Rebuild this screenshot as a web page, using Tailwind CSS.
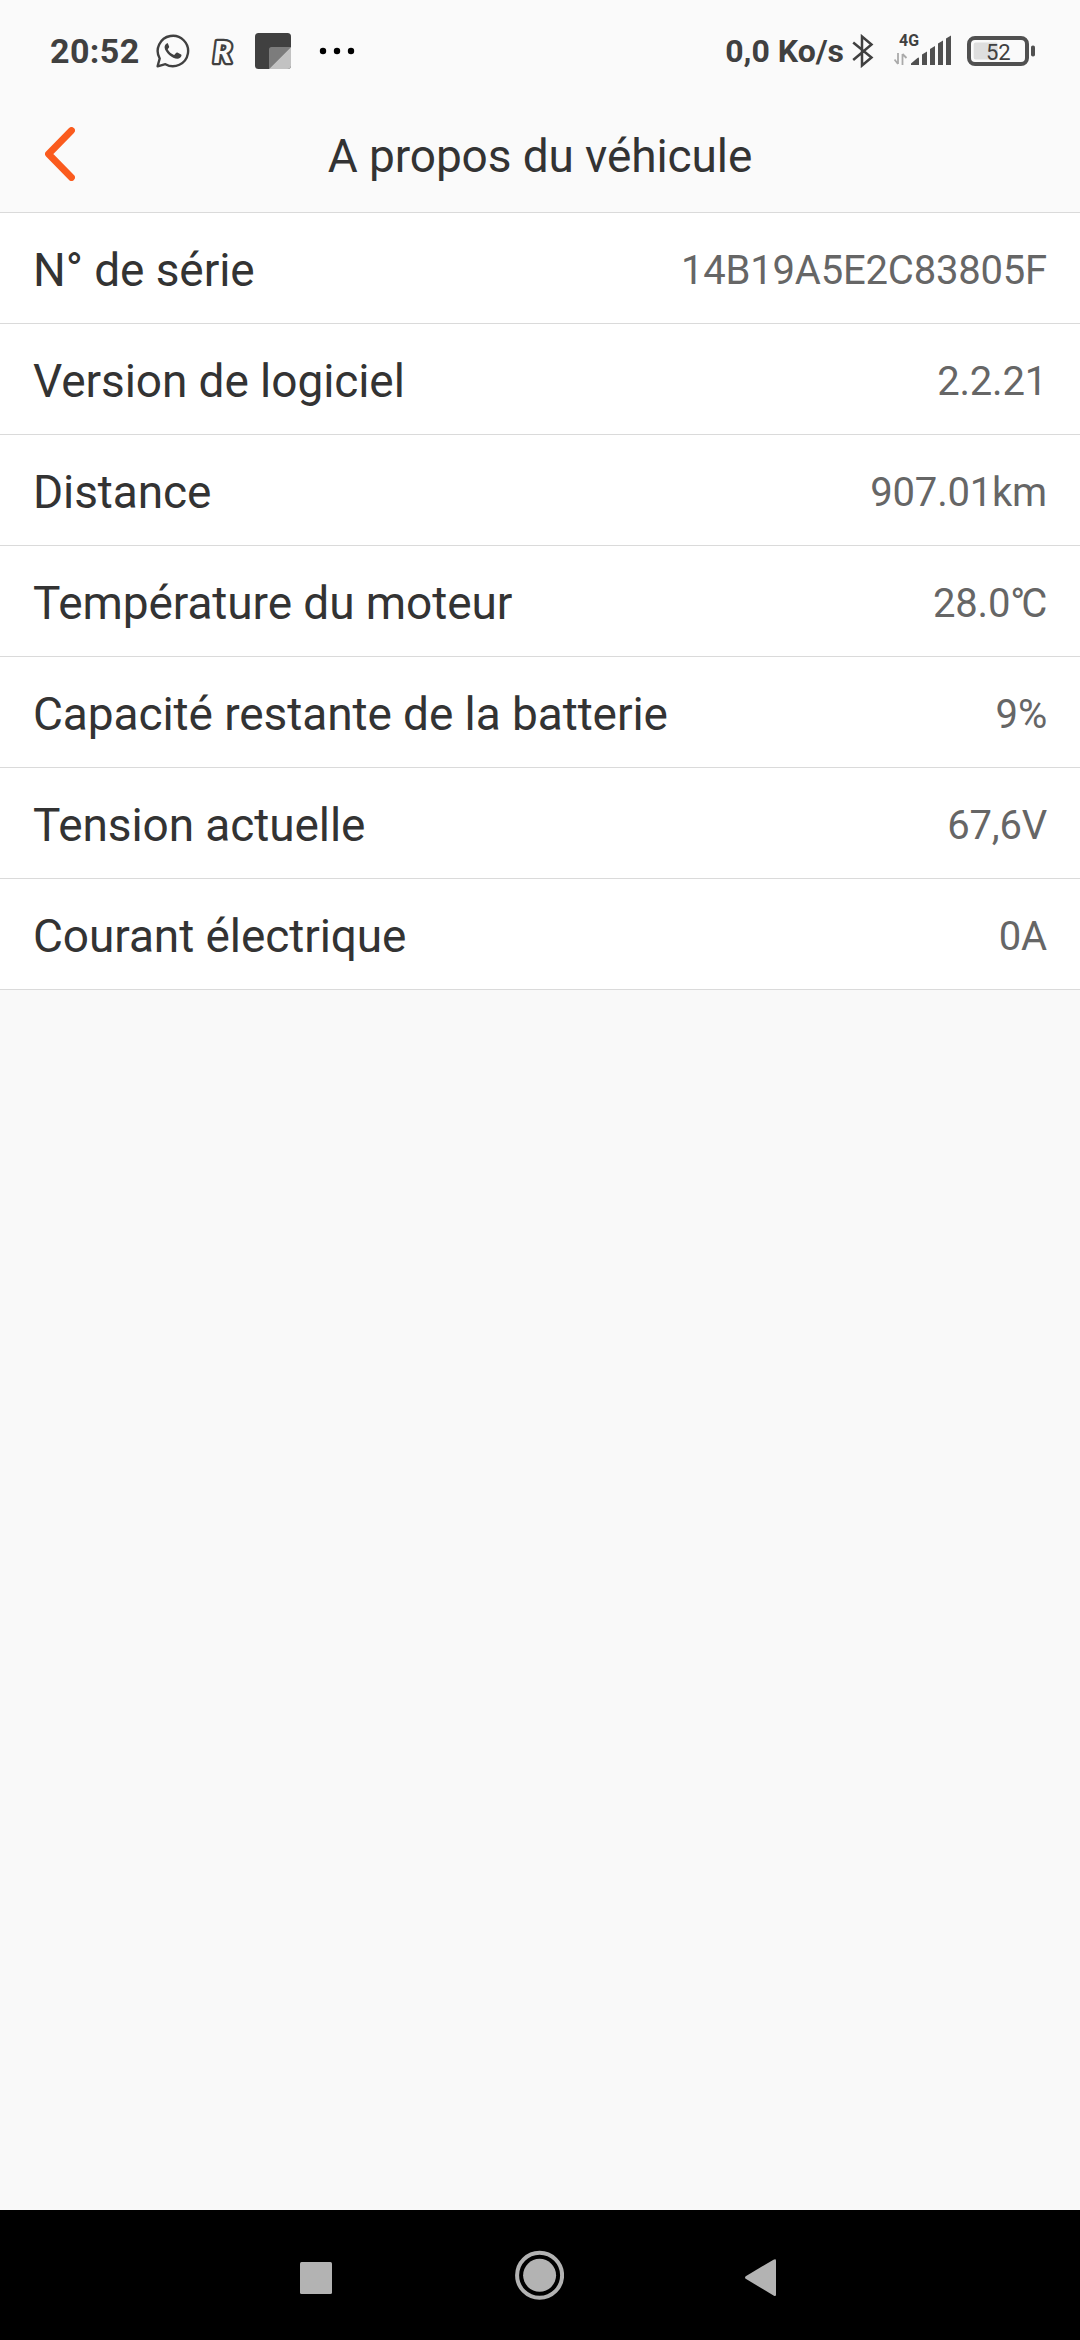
<!DOCTYPE html>
<html lang="fr">
<head>
    <meta charset="UTF-8">
    <meta name="viewport" content="width=device-width, initial-scale=1.0">
    <title>A propos du véhicule</title>
    <script src="https://cdn.jsdelivr.net/npm/@tailwindcss/browser@4"></script>
</head>
<body class="flex flex-col w-[1080px] h-[2340px] overflow-hidden bg-[#f9f9f9] font-[Roboto,sans-serif] text-[#333333]">

    <!-- Status bar -->
    <div class="flex items-center justify-between h-[102px] shrink-0 pl-[50px] pr-[45px] bg-[#fafafa] text-[#404040]">
        <div class="flex items-center">
            <span class="w-[106px] text-[34px] leading-none font-bold tracking-[0.4px]">20:52</span>
            <!-- WhatsApp -->
            <svg class="w-[34px] h-[34px]" viewBox="0 0 34 34" fill="none">
                <path d="M1.6 32.3 L3.7 24.5 A15.2 15.2 0 1 1 9.4 30.2 Z" stroke="currentColor" stroke-width="2.4" stroke-linejoin="round"/>
                <path d="M11.4 9.2c-1.6.5-2.9 2.2-2.8 4.2.2 2.5 2.2 5.3 4.6 7.5 2.700 2.400 5.800 4 8.300 3.900 2-.1 3.700-1.300 4-3.200.1-.7 0-1-.4-1.200l-3.700-1.800c-.6-.3-1-.1-1.400.4l-1.300 1.600c-.3.400-.7.400-1.200.200-2.400-1-4.300-2.800-5.600-5-.2-.4-.2-.7.100-1.100l1-1.300c.2-.4.200-.7.100-1l-1.400-3.300c-.1-.2-.2-.1-.3.100z" fill="currentColor"/>
            </svg>
            <!-- R logo -->
            <svg class="w-[26px] h-[34px] ml-5 overflow-visible" viewBox="0 0 26 34">
                <text x="3" y="28.5" textLength="19" lengthAdjust="spacingAndGlyphs" font-family="Lato" font-weight="900" font-style="italic" font-size="31" fill="#fafafa" stroke="currentColor" stroke-width="4.6" stroke-linejoin="round" paint-order="stroke">R</text>
            </svg>
            <!-- Note square -->
            <svg class="w-9 h-9 ml-[19px]" viewBox="0 0 36 36">
                <rect width="36" height="36" rx="3.5" fill="#404040"/>
                <path d="M14 36V16.5Q14 14 16.5 14H36Z" fill="#7c7c7c"/>
                <path d="M14 36L36 14V32.5Q36 36 32.5 36Z" fill="#c2c2c2"/>
            </svg>
            <svg class="w-9 h-2 ml-[28px]" viewBox="0 0 36 8">
                <circle cx="4" cy="4" r="3.2"/>
                <circle cx="18" cy="4" r="3.2"/>
                <circle cx="32" cy="4" r="3.2"/>
            </svg>
        </div>

        <div class="flex items-center">
            <span class="text-[32px] leading-none font-bold">0,0 Ko/s</span>
            <!-- Bluetooth -->
            <svg class="w-[22px] h-[34px] ml-2" viewBox="0 0 22 34" fill="none" stroke="currentColor" stroke-width="2.5">
                <path d="M1.2 8.500L19.500 23.500L10 31.500V2.500L19.500 10.500L1.200 26"/>
            </svg>
            <!-- Mobile signal -->
            <svg class="w-[58px] h-[42px] ml-5" viewBox="0 -4 58 42">
                <text x="5" y="12.2" font-family="Roboto" font-weight="700" font-size="16" textLength="20" lengthAdjust="spacingAndGlyphs" fill="#404040">4G</text>
                <g fill="none" stroke="#aaaaaa" stroke-width="1.8">
                    <path d="M4 19V30M4 30L0.500 25.500M8.500 31V20M8.500 20L12.500 24"/>
                </g>
                <g fill="#505050">
                    <path d="M17 31V29.500L23.500 24Q25 23 25 24.500V31Z"/>
                    <path d="M28 31V20.500L33 17.500V31Z"/>
                    <path d="M36 31V15L41 12V31Z"/>
                    <path d="M44 31V9.500L49 6.500V31Z"/>
                    <path d="M52 31V4.500L57 1.500V31Z"/>
                </g>
            </svg>
            <!-- Battery -->
            <svg class="w-[68px] h-[30px] ml-[15px]" viewBox="0 0 68 30">
                <rect x="2" y="2" width="58" height="26" rx="6" fill="none" stroke="#505050" stroke-width="4"/>
                <rect x="6.7" y="6.5" width="24" height="17" rx="2" fill="#dedede"/>
                <rect x="64" y="9.5" width="4" height="11" rx="1.8" fill="#505050"/>
                <text x="19" y="23.7" font-family="Roboto" font-size="22" fill="#404040">52</text>
            </svg>
        </div>
    </div>

    <!-- Title bar -->
    <header class="grid grid-cols-[1fr_auto_1fr] items-center h-[111px] shrink-0 px-[45px] bg-[#fafafa] border-b border-[#dadada]">
        <svg class="w-[30px] h-[54px] mb-[6px]" viewBox="0 0 30 54" fill="none">
            <path d="M26.500 3.500L3.500 27L26.500 50.500" stroke="#fa5b1e" stroke-width="6.8" stroke-linecap="round" stroke-linejoin="round"/>
        </svg>
        <h1 class="mb-[2px] text-[46px] leading-none tracking-[-0.1px]">A propos du véhicule</h1>
    </header>

    <!-- Vehicle details -->
    <dl class="bg-white">
        <div class="flex items-center justify-between h-[111px] px-[33px] pt-1 border-b border-[#dadada]">
            <dt class="text-[46px] leading-none tracking-[-0.08px]">N° de série</dt>
            <dd class="mt-[2px] text-[40px] leading-none tracking-[-0.2px] text-[#666666]">14B19A5E2C83805F</dd>
        </div>
        <div class="flex items-center justify-between h-[111px] px-[33px] pt-1 border-b border-[#dadada]">
            <dt class="text-[46px] leading-none tracking-[-0.08px]">Version de logiciel</dt>
            <dd class="mt-[2px] text-[40px] leading-none tracking-[-0.2px] text-[#666666]">2.2.21</dd>
        </div>
        <div class="flex items-center justify-between h-[111px] px-[33px] pt-1 border-b border-[#dadada]">
            <dt class="text-[46px] leading-none tracking-[-0.08px]">Distance</dt>
            <dd class="mt-[2px] text-[40px] leading-none tracking-[-0.2px] text-[#666666]">907.01km</dd>
        </div>
        <div class="flex items-center justify-between h-[111px] px-[33px] pt-1 border-b border-[#dadada]">
            <dt class="text-[46px] leading-none tracking-[-0.08px]">Température du moteur</dt>
            <dd class="mt-[2px] text-[40px] leading-none tracking-[-0.2px] text-[#666666]">28.0<span class="tracking-[-4px]">°</span>C</dd>
        </div>
        <div class="flex items-center justify-between h-[111px] px-[33px] pt-1 border-b border-[#dadada]">
            <dt class="text-[46px] leading-none tracking-[-0.08px]">Capacité restante de la batterie</dt>
            <dd class="mt-[2px] text-[40px] leading-none tracking-[-0.2px] text-[#666666]">9%</dd>
        </div>
        <div class="flex items-center justify-between h-[111px] px-[33px] pt-1 border-b border-[#dadada]">
            <dt class="text-[46px] leading-none tracking-[-0.08px]">Tension actuelle</dt>
            <dd class="mt-[2px] text-[40px] leading-none tracking-[-0.2px] text-[#666666]">67,6V</dd>
        </div>
        <div class="flex items-center justify-between h-[111px] px-[33px] pt-1 border-b border-[#dadada]">
            <dt class="text-[46px] leading-none tracking-[-0.08px]">Courant électrique</dt>
            <dd class="mt-[2px] text-[40px] leading-none tracking-[-0.2px] text-[#666666]">0A</dd>
        </div>
    </dl>

    <!-- Navigation bar -->
    <nav class="flex items-center justify-between h-[130px] shrink-0 mt-auto pl-[300px] pr-[304px] bg-black text-[#b3b3b3]">
        <svg class="w-8 h-8 mt-[6px]" viewBox="0 0 32 32" fill="currentColor">
            <rect width="32" height="32" rx="1.5"/>
        </svg>
        <svg class="w-[50px] h-[50px]" viewBox="0 0 50 50">
            <circle cx="25.6" cy="25.3" r="22.5" fill="none" stroke="currentColor" stroke-width="4"/>
            <circle cx="25.6" cy="25.3" r="16.5" fill="currentColor"/>
        </svg>
        <svg class="w-[31px] h-[38px] mt-[6px]" viewBox="0 0 31 38" fill="currentColor">
            <path d="M0.700 17.200Q-0.700 18.500 0.700 19.800L28.500 36.500Q31 38 31 35.500V1.500Q31 -0.500 28.500 0.700Z"/>
        </svg>
    </nav>

</body>
</html>
